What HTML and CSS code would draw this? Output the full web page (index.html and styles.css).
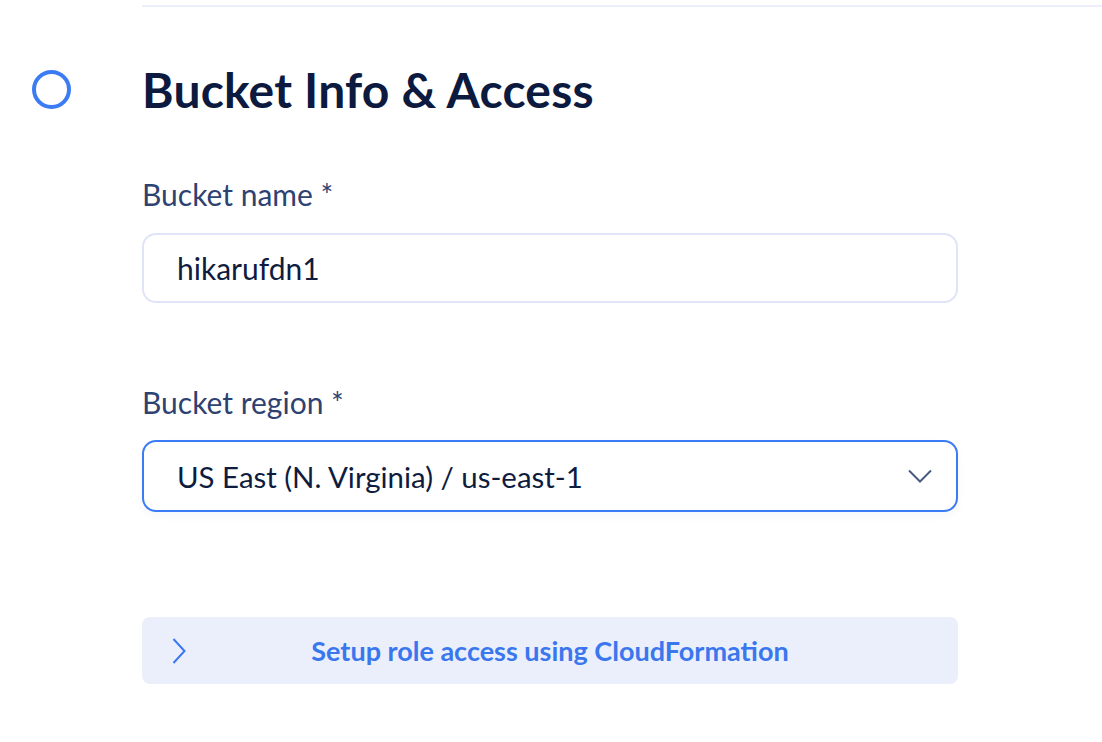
FILE: index.html
```html
<!DOCTYPE html>
<html lang="en">
<head>
<meta charset="utf-8">
<title>Bucket Info &amp; Access</title>
<link rel="stylesheet" href="styles.css">
</head>
<body>
<div class="page">
  <div class="rail">
    <span class="step-ring"></span>
  </div>
  <div class="content">
    <div class="divider"></div>
    <h1 class="title">Bucket Info &amp; Access</h1>
    <form class="form">
      <div class="field field-name">
        <label class="label">Bucket name *</label>
        <div class="input">hikarufdn1</div>
      </div>
      <div class="field field-region">
        <label class="label">Bucket region *</label>
        <div class="select">
          <span class="select-value">US East (N. Virginia) / us-east-1</span>
          <svg class="select-chev" width="24" height="14" viewBox="0 0 24 14" fill="none"><path d="M1 1.5 L12 12.5 L23 1.5" stroke="#4b5a80" stroke-width="2"/></svg>
        </div>
      </div>
      <div class="accordion">
        <svg class="acc-chev" width="14" height="26" viewBox="0 0 14 26" fill="none"><path d="M1.5 1 L12.5 13 L1.5 25" stroke="#3b78f0" stroke-width="2"/></svg>
        <span class="acc-text">Setup role access using CloudFormation</span>
      </div>
    </form>
  </div>
</div>
</body>
</html>
```
FILE: styles.css
```css
html, body {
  margin: 0;
  padding: 0;
  background: #ffffff;
}
body {
  font-family: "Lato", "Open Sans", sans-serif;
  color: #0d1b3e;
  width: 1102px;
  height: 742px;
  overflow: hidden;
}
.page {
  display: grid;
  grid-template-columns: 142px 1fr;
}
.rail {
  padding-top: 70px;
  padding-left: 32px;
}
.step-ring {
  display: block;
  width: 39px;
  height: 39px;
  box-sizing: border-box;
  border: 4px solid #3b7cf5;
  border-radius: 50%;
}
.content {
  padding-top: 5px;
}
.divider {
  height: 2px;
  background: #eceefc;
}
.title {
  margin: 55px 0 0 0;
  font-family: "Lato", sans-serif;
  font-weight: 700;
  font-size: 48px;
  line-height: 56px;
  color: #0b1a3e;
  letter-spacing: 0.2px;
}
.form {
  width: 816px;
  display: flex;
  flex-direction: column;
}
.field {
  display: flex;
  flex-direction: column;
}
.label {
  font-size: 30px;
  line-height: 36px;
  color: #2e4272;
}
.field-name .label {
  margin-top: 58px;
}
.field-region .label {
  margin-top: 81px;
}
.input {
  margin-top: 21px;
  height: 70px;
  box-sizing: border-box;
  border: 2px solid #dfe5f7;
  border-radius: 14px;
  padding: 0 33px;
  display: flex;
  align-items: center;
  font-size: 30px;
  color: #0e1c40;
}
.select {
  margin-top: 20px;
  height: 72px;
  box-sizing: border-box;
  border: 2px solid #3b7cf5;
  border-radius: 14px;
  padding: 0 24px 0 33px;
  display: flex;
  align-items: center;
  justify-content: space-between;
  font-size: 29.4px;
  color: #0e1c40;
  box-shadow: 0 4px 8px rgba(30, 50, 110, 0.04);
}
.select-chev {
  display: block;
}
.accordion {
  margin-top: 105px;
  height: 67px;
  border-radius: 8px;
  background: #ebeffc;
  display: flex;
  align-items: center;
  padding-left: 30px;
}
.acc-chev {
  display: block;
  flex: none;
}
.acc-text {
  flex: 1;
  text-align: center;
  padding-right: 44px;
  font-size: 27px;
  font-weight: 700;
  color: #3a77ee;
}
```
